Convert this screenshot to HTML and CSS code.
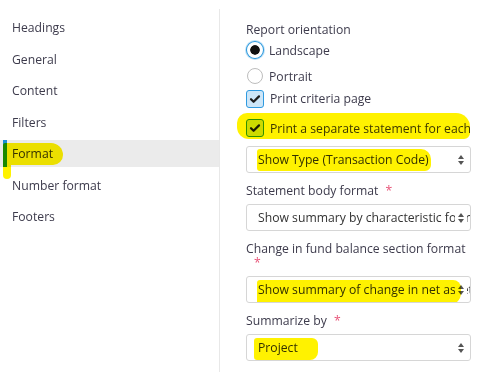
FILE: index.html
```html
<!DOCTYPE html>
<html lang="en">
<head>
  <meta charset="UTF-8">
  <meta name="viewport" content="width=device-width, initial-scale=1.0">
  <title>Report options</title>
  <link rel="stylesheet" href="styles.css">
</head>
<body>
  <div class="page">
    <nav class="sidebar">
      <div class="nav-item">Headings</div>
      <div class="nav-item">General</div>
      <div class="nav-item">Content</div>
      <div class="nav-item">Filters</div>
      <div class="nav-item active">Format<span class="marker marker-nav"></span></div>
      <div class="nav-item">Number format</div>
      <div class="nav-item">Footers</div>
    </nav>

    <main class="panel">
      <div class="group-label">Report orientation</div>
      <label class="option option-radio">
        <span class="radio checked"></span>Landscape
      </label>
      <label class="option option-radio last">
        <span class="radio"></span>Portrait
      </label>
      <label class="option option-check">
        <span class="checkbox"><svg viewBox="0 0 18 18"><path d="M5 9.2l2.6 2.6L13 6.4" /></svg></span>Print criteria page
      </label>
      <label class="option option-hl">
        <span class="checkbox"><svg viewBox="0 0 18 18"><path d="M5 9.2l2.6 2.6L13 6.4" /></svg></span>Print a separate statement for each
        <span class="marker marker-check"></span>
      </label>

      <div class="select first">
        Show Type (Transaction Code)
        <span class="arrows"></span>
        <span class="marker marker-sel1"></span>
      </div>

      <div class="field-label">Statement body format <span class="req">*</span></div>
      <div class="select">
        Show summary by characteristic format
        <span class="arrows"></span>
      </div>

      <div class="field-label">Change in fund balance section format<br><span class="req">*</span></div>
      <div class="select">
        Show summary of change in net assets
        <span class="arrows"></span>
        <span class="marker marker-sel3"></span>
      </div>

      <div class="field-label">Summarize by <span class="req">*</span></div>
      <div class="select">
        Project
        <span class="arrows"></span>
        <span class="marker marker-sel4"></span>
      </div>
    </main>
  </div>
</body>
</html>
```

FILE: styles.css
```css
body {
  margin: 0;
  font-family: "Open Sans", "Noto Sans", Arial, sans-serif;
  font-size: 12.2px;
  color: #3d3b4c;
  background-color: #fff;
}
.page {
  display: flex;
  height: 372px;
  overflow: hidden;
}
.sidebar {
  width: 219px;
  margin-top: 9px;
  padding-top: 5px;
  border-right: 1px solid #e8e8e8;
  flex-shrink: 0;
}
.nav-item {
  position: relative;
  height: 27px;
  line-height: 27px;
  margin-bottom: 4.5px;
  padding-left: 12px;
}
.nav-item.active {
  background-color: #ebebeb;
  color: #333;
}
.nav-item.active::before {
  content: "";
  position: absolute;
  left: 3px;
  top: 0;
  bottom: 0;
  width: 4px;
  background-color: #1a8fd8;
}
.panel {
  flex: 1;
  padding: 23px 0 0 26px;
}
.group-label {
  height: 14px;
  line-height: 14px;
  margin-bottom: 4px;
}
.option {
  position: relative;
  display: flex;
  align-items: center;
  gap: 6px;
  height: 18px;
  margin-bottom: 8px;
}
.option-radio.last {
  margin-bottom: 4.5px;
}
.option-check {
  margin-bottom: 11.5px;
}
.radio {
  width: 16px;
  height: 16px;
  margin-left: 1px;
  border: 1px solid #bdbdbd;
  border-radius: 50%;
  box-sizing: border-box;
  background-color: #fff;
  flex-shrink: 0;
}
.radio.checked {
  border: 3px solid #fff;
  background-color: #111;
  background-clip: padding-box;
  box-shadow: 0 0 0 1px #2a97dc, 0 0 0 2px #bfe1f7;
}
.checkbox {
  width: 18px;
  height: 18px;
  box-sizing: border-box;
  border: 1px solid #2f9ae0;
  border-radius: 3px;
  background-color: #cde6f8;
  flex-shrink: 0;
  display: flex;
}
.checkbox svg {
  width: 18px;
  height: 18px;
  margin: -1px;
}
.checkbox path {
  fill: none;
  stroke: #1d1d1d;
  stroke-width: 2.2;
  stroke-linecap: round;
  stroke-linejoin: round;
}
.option-hl {
  margin-bottom: 9px;
}
.select {
  position: relative;
  width: 225px;
  height: 27px;
  line-height: 25px;
  box-sizing: border-box;
  border: 1px solid #d6d6d6;
  border-radius: 3px;
  padding: 0 15px 0 11px;
  white-space: nowrap;
  overflow: hidden;
  color: #333;
}
.select .arrows {
  position: absolute;
  right: 3px;
  top: 0;
  bottom: 0;
  width: 12px;
  background-color: #fff;
}
.select .arrows::before,
.select .arrows::after {
  content: "";
  position: absolute;
  left: 3px;
  border-left: 3.5px solid transparent;
  border-right: 3.5px solid transparent;
}
.select .arrows::before {
  top: 8px;
  border-bottom: 4px solid #555;
}
.select .arrows::after {
  top: 14px;
  border-top: 4px solid #555;
}
.field-label {
  margin-top: 11px;
  margin-bottom: 6px;
  line-height: 14px;
}
.req {
  color: #e8567a;
  margin-left: 4px;
}
.field-label br + .req {
  margin-left: 8px;
}
.marker {
  position: absolute;
  background-color: #fff200;
  mix-blend-mode: multiply;
  pointer-events: none;
}
.marker-nav {
  left: 3px;
  top: 3px;
  width: 60px;
  height: 22px;
  border-radius: 2px 12px 10px 2px;
}
.marker-nav::after {
  content: "";
  position: absolute;
  left: 0;
  top: 20px;
  width: 8px;
  height: 16px;
  background-color: #fff200;
  border-radius: 0 0 4px 4px;
}
.marker-check {
  left: -9px;
  top: -6px;
  width: 233px;
  height: 26px;
  border-radius: 10px 14px 6px 12px;
}
.marker-sel1 {
  left: 10px;
  top: 2px;
  width: 174px;
  height: 22px;
  border-radius: 3px 10px 6px 3px;
}
.marker-sel3 {
  left: 10px;
  top: 3px;
  width: 204px;
  height: 25px;
  border-radius: 3px 8px 12px 3px;
}
.marker-sel4 {
  left: 7px;
  top: 3px;
  width: 64px;
  height: 22px;
  border-radius: 3px 6px 8px 3px;
}
```
